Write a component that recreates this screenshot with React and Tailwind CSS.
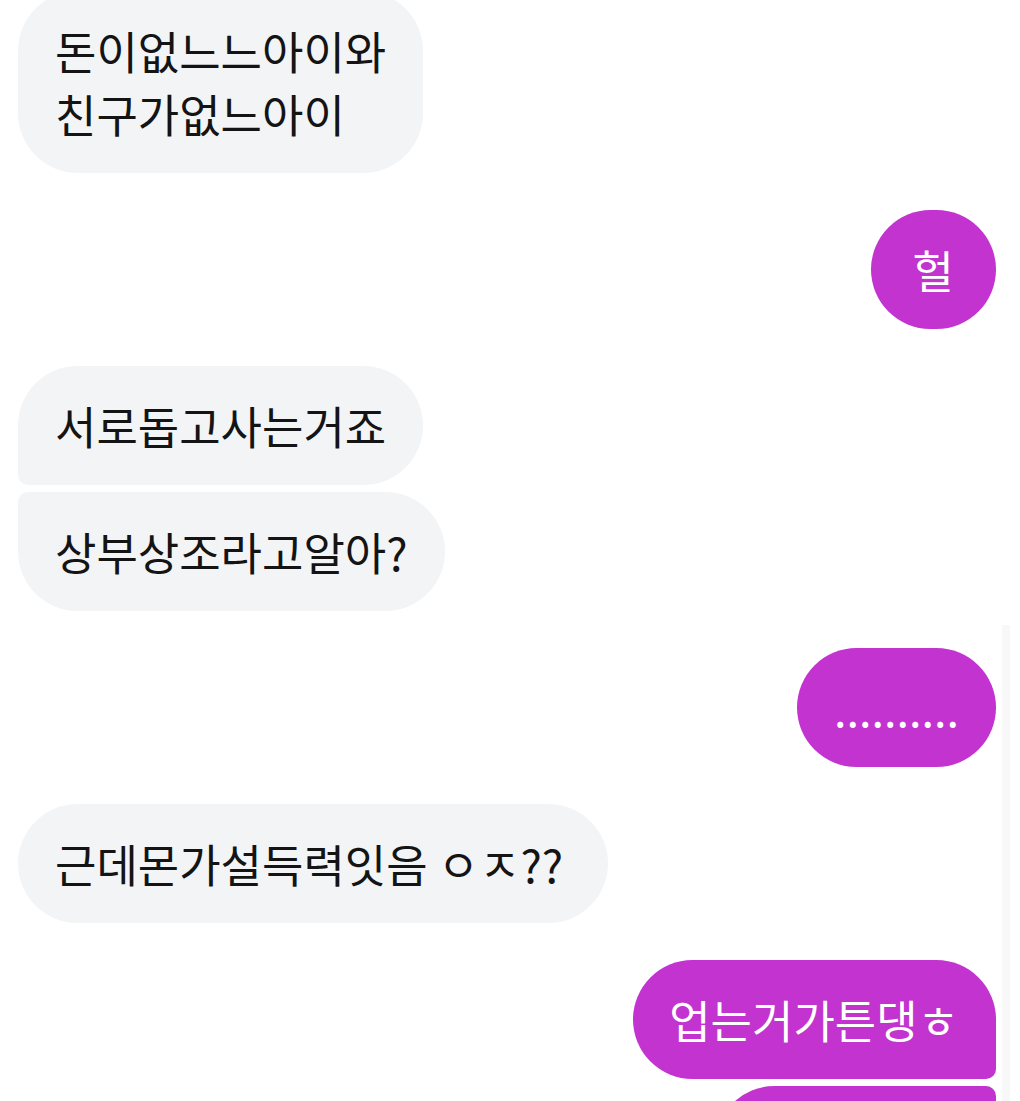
import React from "react";

const font = { fontFamily: '"Noto Sans CJK KR", "Noto Sans", sans-serif' };

function Left({ children, cls = "" }) {
  return (
    <div className="flex justify-start">
      <div className={"bg-[#f3f4f6] text-[#141414] pl-[37px] py-[28px] text-[45px] leading-[63px] " + cls}>
        {children}
      </div>
    </div>
  );
}

function Right({ children, cls = "" }) {
  return (
    <div className="flex justify-end">
      <div className={"bg-[#c233d0] text-white pr-[37px] py-[28px] text-[45px] leading-[63px] " + cls}>
        {children}
      </div>
    </div>
  );
}

export default function App() {
  return (
    <div className="relative w-[1020px] h-[1101px] overflow-hidden bg-white" style={font}>
      <div className="flex flex-col pl-[18px] pr-[24px] -mt-[9px]">
        <Left cls="rounded-[60px] pr-[37px]">
          돈이없느느아이와
          <br />
          친구가없느아이
        </Left>
        <div className="h-[37px]" />
        <Right cls="rounded-[60px] pl-[42px] pr-[42px]">헐</Right>
        <div className="h-[37px]" />
        <Left cls="rounded-[60px] rounded-bl-[10px] pr-[37px]">서로돕고사는거죠</Left>
        <div className="h-[7px]" />
        <Left cls="rounded-[60px] rounded-tl-[10px] pr-[37px]">상부상조라고알아?</Left>
        <div className="h-[37px]" />
        <Right cls="rounded-[60px] pl-[37px]">..........</Right>
        <div className="h-[37px]" />
        <Left cls="rounded-[60px] pr-[45px]">근데몬가설득력잇음 ㅇㅈ??</Left>
        <div className="h-[37px]" />
        <Right cls="rounded-[60px] rounded-br-[10px] pl-[36px]">업는거가튼댕ㅎ</Right>
        <div className="h-[7px]" />
        <Right cls="rounded-[60px] rounded-tr-[10px] pl-[37px]">ㅋㅋㅋㅋㅋ</Right>
      </div>
      <div className="absolute left-[1002px] top-[625px] w-[8px] h-[476px] bg-[#f8f8f8]" />
    </div>
  );
}
